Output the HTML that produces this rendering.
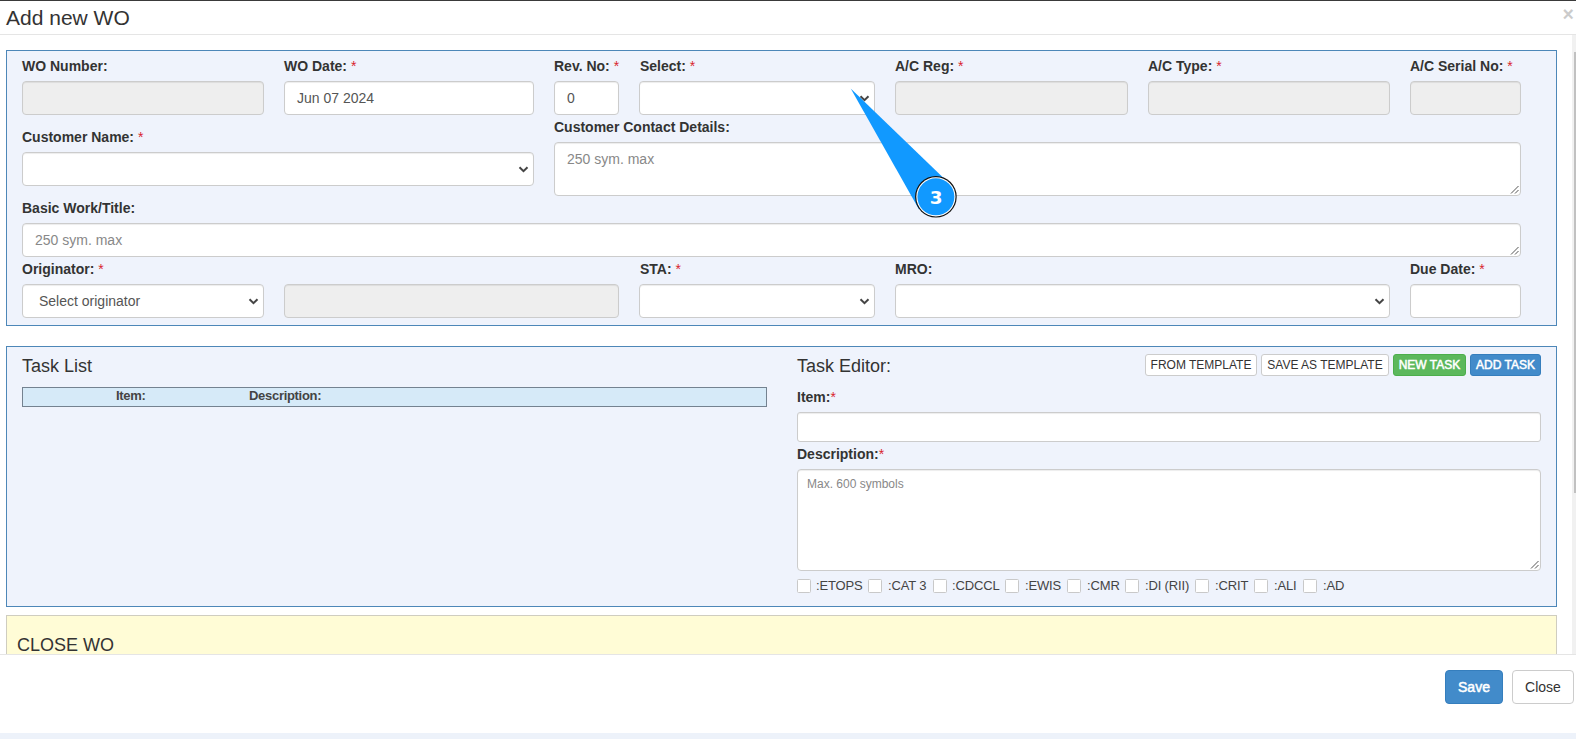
<!DOCTYPE html>
<html lang="en">
<head>
<meta charset="utf-8">
<title>Add new WO</title>
<style>
*{box-sizing:border-box;margin:0;padding:0}
html,body{width:1576px;height:739px;overflow:hidden;background:#fff}
body{font-family:"Liberation Sans",Arial,sans-serif;font-size:14px;color:#333;position:relative}
.abs{position:absolute}
.topline{left:0;top:0;width:1576px;height:1px;background:#3a3a3a}
.title{left:6px;top:6px;font-size:21px;line-height:24px;color:#333;white-space:nowrap}
.hline{left:0;top:34px;width:1576px;height:1px;background:#e5e5e5}
.x{left:1562.5px;top:2px;font-size:19.5px;font-weight:bold;line-height:24px;color:#000;opacity:.2;text-shadow:0 1px 0 #fff}
.panel{left:6px;width:1551px;border:1px solid #4d87b8;background:#eff3fc}
.lbl{font-weight:bold;font-size:14px;line-height:20px;white-space:nowrap;color:#333}
.lbl i{font-style:normal;font-weight:normal;color:#d9232e}
.fc{height:34px;border:1px solid #ccc;border-radius:4px;background:#fff;box-shadow:inset 0 1px 1px rgba(0,0,0,.075);font-size:14px;line-height:32px;color:#555;padding:0 12px;white-space:nowrap;overflow:hidden}
.fc.dis{background:#eee}
.fc.ph{color:#888}
.chev{width:11px;height:7px}
.grip{width:9px;height:9px}
h4,.h4{font-size:18px;font-weight:normal;line-height:20px;color:#333;white-space:nowrap}
.thead{left:22px;top:387px;width:745px;height:20px;border:1px solid #748290;background:#d6eaf8}
.th{font-size:13px;font-weight:bold;line-height:16px;color:#444;white-space:nowrap;letter-spacing:-.3px}
.bx{top:354px;height:22px;border:1px solid #ccc;border-radius:3px;background:#fff;font-size:12px;line-height:20px;text-align:center;color:#333;white-space:nowrap}
.bx.g{background:#5cb85c;border-color:#4cae4c;color:#fff;-webkit-text-stroke:.5px #fff}
.bx.b{background:#428bca;border-color:#357ebd;color:#fff;-webkit-text-stroke:.5px #fff}
.cb{top:579px;width:14px;height:14px;border:1px solid #c9c9c9;border-radius:1.5px;background:#fff}
.cl{top:578px;font-size:13px;line-height:16px;color:#444;white-space:nowrap;letter-spacing:-.15px}
.yellow{left:6px;top:615px;width:1551px;height:45px;border:1px solid #cfcdc0;background:#fffcd6}
.footer{left:0;top:654px;width:1576px;height:79px;background:#fff;border-top:1px solid #e5e5e5}
.strip{left:0;top:733px;width:1576px;height:6px;background:#edf2fa}
.btn{top:670px;height:34px;border-radius:4px;font-size:14px;line-height:32px;text-align:center;border:1px solid #ccc;background:#fff;color:#333}
.btn.p{background:#428bca;border-color:#357ebd;color:#fff;-webkit-text-stroke:.5px #fff}
.sbt{left:1572px;top:35px;width:4px;height:619px;background:#f1f1f1}
.sbh{left:1574px;top:52px;width:2px;height:441px;background:#c1c1c1}
</style>
</head>
<body>
<div class="abs topline"></div>
<div class="abs title">Add new WO</div>
<div class="abs x">×</div>
<div class="abs hline"></div>

<!-- panel 1 -->
<div class="abs panel" style="top:50px;height:276px"></div>

<div class="abs lbl" style="left:22px;top:56px">WO Number:</div>
<div class="abs lbl" style="left:284px;top:56px">WO Date: <i>*</i></div>
<div class="abs lbl" style="left:554px;top:56px">Rev. No: <i>*</i></div>
<div class="abs lbl" style="left:640px;top:56px">Select: <i>*</i></div>
<div class="abs lbl" style="left:895px;top:56px">A/C Reg: <i>*</i></div>
<div class="abs lbl" style="left:1148px;top:56px">A/C Type: <i>*</i></div>
<div class="abs lbl" style="left:1410px;top:56px">A/C Serial No: <i>*</i></div>

<div class="abs fc dis" style="left:22px;top:81px;width:242px"></div>
<div class="abs fc" style="left:284px;top:81px;width:250px">Jun 07 2024</div>
<div class="abs fc" style="left:554px;top:81px;width:65px">0</div>
<div class="abs fc" style="left:639px;top:81px;width:236px"></div>
<svg class="abs chev" style="left:859px;top:95px" viewBox="0 0 11 7"><path d="M1.5 1.2 L5.5 5.2 L9.5 1.2" fill="none" stroke="#444" stroke-width="2"/></svg>
<div class="abs fc dis" style="left:895px;top:81px;width:233px"></div>
<div class="abs fc dis" style="left:1148px;top:81px;width:242px"></div>
<div class="abs fc dis" style="left:1410px;top:81px;width:111px"></div>

<div class="abs lbl" style="left:22px;top:127px">Customer Name: <i>*</i></div>
<div class="abs fc" style="left:22px;top:152px;width:512px"></div>
<svg class="abs chev" style="left:518px;top:166px" viewBox="0 0 11 7"><path d="M1.5 1.2 L5.5 5.2 L9.5 1.2" fill="none" stroke="#444" stroke-width="2"/></svg>

<div class="abs lbl" style="left:554px;top:117px">Customer Contact Details:</div>
<div class="abs fc ph" style="left:554px;top:142px;width:967px;height:54px">250 sym. max</div>
<svg class="abs grip" style="left:1510px;top:185px" viewBox="0 0 9 9"><path d="M8.5 1 L1 8.5 M8.5 5 L5 8.5" stroke="#555" stroke-width="1" fill="none"/></svg>

<div class="abs lbl" style="left:22px;top:198px">Basic Work/Title:</div>
<div class="abs fc ph" style="left:22px;top:223px;width:1499px">250 sym. max</div>
<svg class="abs grip" style="left:1510px;top:246px" viewBox="0 0 9 9"><path d="M8.5 1 L1 8.5 M8.5 5 L5 8.5" stroke="#555" stroke-width="1" fill="none"/></svg>

<div class="abs lbl" style="left:22px;top:259px">Originator: <i>*</i></div>
<div class="abs lbl" style="left:640px;top:259px">STA: <i>*</i></div>
<div class="abs lbl" style="left:895px;top:259px">MRO:</div>
<div class="abs lbl" style="left:1410px;top:259px">Due Date: <i>*</i></div>

<div class="abs fc" style="left:22px;top:284px;width:242px;padding-left:16px">Select originator</div>
<svg class="abs chev" style="left:248px;top:298px" viewBox="0 0 11 7"><path d="M1.5 1.2 L5.5 5.2 L9.5 1.2" fill="none" stroke="#444" stroke-width="2"/></svg>
<div class="abs fc dis" style="left:284px;top:284px;width:335px"></div>
<div class="abs fc" style="left:639px;top:284px;width:236px"></div>
<svg class="abs chev" style="left:859px;top:298px" viewBox="0 0 11 7"><path d="M1.5 1.2 L5.5 5.2 L9.5 1.2" fill="none" stroke="#444" stroke-width="2"/></svg>
<div class="abs fc" style="left:895px;top:284px;width:495px"></div>
<svg class="abs chev" style="left:1374px;top:298px" viewBox="0 0 11 7"><path d="M1.5 1.2 L5.5 5.2 L9.5 1.2" fill="none" stroke="#444" stroke-width="2"/></svg>
<div class="abs fc" style="left:1410px;top:284px;width:111px"></div>

<!-- panel 2 -->
<div class="abs panel" style="top:346px;height:261px"></div>
<div class="abs h4" style="left:22px;top:356px">Task List</div>
<div class="abs thead"></div>
<div class="abs th" style="left:116px;top:388px">Item:</div>
<div class="abs th" style="left:249px;top:388px">Description:</div>

<div class="abs h4" style="left:797px;top:356px">Task Editor:</div>
<div class="abs bx" style="left:1145px;width:112px">FROM TEMPLATE</div>
<div class="abs bx" style="left:1261px;width:128px">SAVE AS TEMPLATE</div>
<div class="abs bx g" style="left:1393px;width:73px">NEW TASK</div>
<div class="abs bx b" style="left:1470px;width:71px">ADD TASK</div>

<div class="abs lbl" style="left:797px;top:387px">Item:<i>*</i></div>
<div class="abs fc" style="left:797px;top:412px;width:744px;height:30px;border-radius:3px"></div>
<div class="abs lbl" style="left:797px;top:444px">Description:<i>*</i></div>
<div class="abs fc ph" style="left:797px;top:469px;width:744px;height:102px;font-size:12px;line-height:28px;padding-left:9px">Max. 600 symbols</div>
<svg class="abs grip" style="left:1530px;top:560px" viewBox="0 0 9 9"><path d="M8.5 1 L1 8.5 M8.5 5 L5 8.5" stroke="#555" stroke-width="1" fill="none"/></svg>

<div class="abs cb" style="left:797px"></div><div class="abs cl" style="left:816px">:ETOPS</div>
<div class="abs cb" style="left:868px"></div><div class="abs cl" style="left:888px">:CAT 3</div>
<div class="abs cb" style="left:933px"></div><div class="abs cl" style="left:952px">:CDCCL</div>
<div class="abs cb" style="left:1005px"></div><div class="abs cl" style="left:1025px">:EWIS</div>
<div class="abs cb" style="left:1067px"></div><div class="abs cl" style="left:1087px">:CMR</div>
<div class="abs cb" style="left:1125px"></div><div class="abs cl" style="left:1145px">:DI (RII)</div>
<div class="abs cb" style="left:1195px"></div><div class="abs cl" style="left:1215px">:CRIT</div>
<div class="abs cb" style="left:1254px"></div><div class="abs cl" style="left:1274px">:ALI</div>
<div class="abs cb" style="left:1303px"></div><div class="abs cl" style="left:1323px">:AD</div>

<!-- yellow panel -->
<div class="abs yellow"></div>
<div class="abs h4" style="left:17px;top:635px">CLOSE WO</div>

<!-- scrollbar -->
<div class="abs sbt"></div>
<div class="abs sbh"></div>

<!-- footer -->
<div class="abs footer"></div>
<div class="abs strip"></div>
<div class="abs btn p" style="left:1445px;width:58px">Save</div>
<div class="abs btn" style="left:1512px;width:62px">Close</div>

<!-- annotation pointer -->
<svg class="abs" style="left:0;top:0" width="1576" height="739" viewBox="0 0 1576 739">
  <polygon points="850.7,88.6 950.3,184.4 918.9,209.2" fill="#1199ff"/>
  <circle cx="935.9" cy="196.8" r="20.8" fill="#111"/>
  <circle cx="935.9" cy="196.8" r="19.6" fill="#fff"/>
  <circle cx="935.9" cy="196.8" r="18.5" fill="#1199ff"/>
  <text x="936.1" y="204.4" text-anchor="middle" font-family="DejaVu Sans, Liberation Sans, sans-serif" font-weight="bold" font-size="18.4" fill="#fff">3</text>
</svg>
</body>
</html>
